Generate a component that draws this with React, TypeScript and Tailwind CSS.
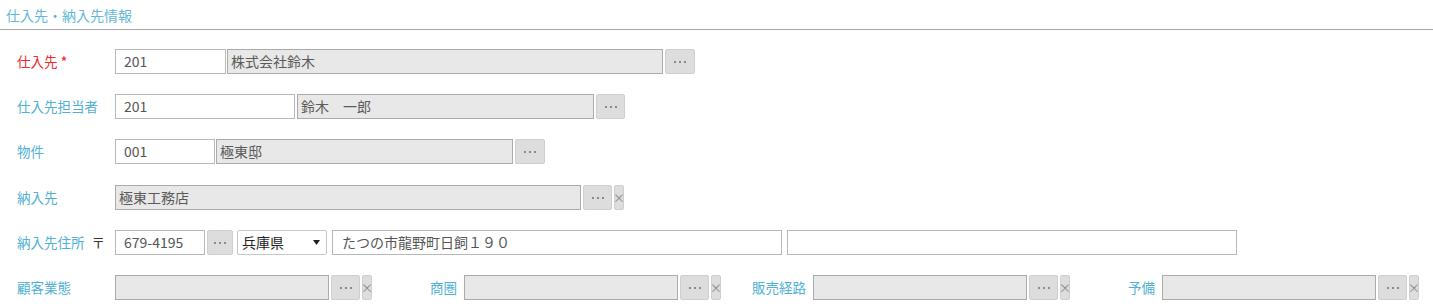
const FONT = "font-['Noto_Sans_CJK_JP','Liberation_Sans',sans-serif]";

function Dots() {
  return (
    <span className="flex gap-[3px]">
      <span className="block h-[2px] w-[2px] bg-[#8a8a8a]" />
      <span className="block h-[2px] w-[2px] bg-[#8a8a8a]" />
      <span className="block h-[2px] w-[2px] bg-[#8a8a8a]" />
    </span>
  );
}

function RefButton({ w = 'w-[29px]' }: { w?: string }) {
  return (
    <button className={`${w} h-[25px] shrink-0 flex items-center justify-center bg-[#dddddd] border border-[#cfcfcf] rounded-[2px]`}>
      <Dots />
    </button>
  );
}

function ClearButton() {
  return (
    <button className="w-[10px] h-[25px] shrink-0 flex items-center justify-center bg-[#dddddd] border border-[#cfcfcf] rounded-[2px] text-[12px] leading-none text-[#888]">
      ×
    </button>
  );
}

function TextBox({ w, value = '', pad = 'pl-[8px]' }: { w: string; value?: string; pad?: string }) {
  return (
    <div className={`${w} h-[25px] shrink-0 flex items-center bg-white border border-[#b8b8b8] ${pad} text-[14px] text-[#555]`}>
      {value}
    </div>
  );
}

function ReadBox({ w, value = '' }: { w: string; value?: string }) {
  return (
    <div className={`${w} h-[25px] shrink-0 flex items-center bg-[#e8e8e8] border border-[#ababab] pl-[3px] text-[14px] text-[#5a5a5a]`}>
      {value}
    </div>
  );
}

function Label({ children, red }: { children: React.ReactNode; red?: boolean }) {
  return (
    <div className={`w-[98px] shrink-0 flex items-center text-[13.5px] ${red ? 'text-[#f02828]' : 'text-[#4fb1d3]'}`}>
      {children}
    </div>
  );
}

function Group({ label, first }: { label: string; first?: boolean }) {
  return (
    <div className="flex items-center">
      {first ? (
        <Label>{label}</Label>
      ) : (
        <div className="w-[92px] shrink-0 pr-[7px] text-right text-[13.5px] text-[#4fb1d3]">{label}</div>
      )}
      <ReadBox w="w-[214px]" />
      <div className="w-[2px]" />
      <RefButton />
      <div className="w-[2px]" />
      <ClearButton />
    </div>
  );
}

export default function App() {
  return (
    <div className={`w-[1433px] h-[307px] bg-white ${FONT}`}>
      <div className="h-[30px] border-b border-[#a9a9a9] pl-[6px] pt-[5px] text-[14px] text-[#62b8d8]">
        仕入先・納入先情報
      </div>

      <div className="pt-[19px] pl-[17px] flex flex-col gap-[20px]">
        {/* 仕入先 */}
        <div className="flex items-center h-[25px]">
          <Label red>
            仕入先<span className="ml-[3px] text-[15px] leading-none">*</span>
          </Label>
          <TextBox w="w-[111px]" value="201" />
          <div className="w-[1px]" />
          <ReadBox w="w-[436px]" value="株式会社鈴木" />
          <div className="w-[2px]" />
          <RefButton w="w-[30px]" />
        </div>

        {/* 仕入先担当者 */}
        <div className="flex items-center h-[25px]">
          <Label>仕入先担当者</Label>
          <TextBox w="w-[180px]" value="201" />
          <div className="w-[2px]" />
          <ReadBox w="w-[297px]" value="鈴木　一郎" />
          <div className="w-[2px]" />
          <RefButton />
        </div>

        {/* 物件 */}
        <div className="flex items-center h-[25px]">
          <Label>物件</Label>
          <TextBox w="w-[100px]" value="001" />
          <div className="w-[1px]" />
          <ReadBox w="w-[297px]" value="極東邸" />
          <div className="w-[2px]" />
          <RefButton w="w-[30px]" />
        </div>

        {/* 納入先 */}
        <div className="flex items-center h-[25px] mt-[1px]">
          <Label>納入先</Label>
          <ReadBox w="w-[466px]" value="極東工務店" />
          <div className="w-[2px]" />
          <RefButton />
          <div className="w-[2px]" />
          <ClearButton />
        </div>

        {/* 納入先住所 */}
        <div className="flex items-center h-[25px]">
          <Label>
            納入先住所
            <span className="ml-[7px] text-[#333]">〒</span>
          </Label>
          <TextBox w="w-[90px]" value="679-4195" />
          <div className="w-[2px]" />
          <RefButton w="w-[26px]" />
          <div className="w-[4px]" />
          <div className="w-[90px] h-[25px] shrink-0 flex items-center justify-between bg-white border border-[#c8c8c8] rounded-[2px] pl-[4px] pr-[6px] text-[14px] text-[#222]">
            <span>兵庫県</span>
            <svg width="7" height="5" viewBox="0 0 7 5">
              <path d="M0 0 L7 0 L3.5 5 Z" fill="#222" />
            </svg>
          </div>
          <div className="w-[5px]" />
          <TextBox w="w-[450px]" value="たつの市龍野町日飼１９０" pad="pl-[9px]" />
          <div className="w-[5px]" />
          <TextBox w="w-[450px]" />
        </div>

        {/* 顧客業態 etc */}
        <div className="flex items-center h-[25px]">
          <Group label="顧客業態" first />
          <Group label="商圏" />
          <Group label="販売経路" />
          <Group label="予備" />
        </div>
      </div>
    </div>
  );
}
